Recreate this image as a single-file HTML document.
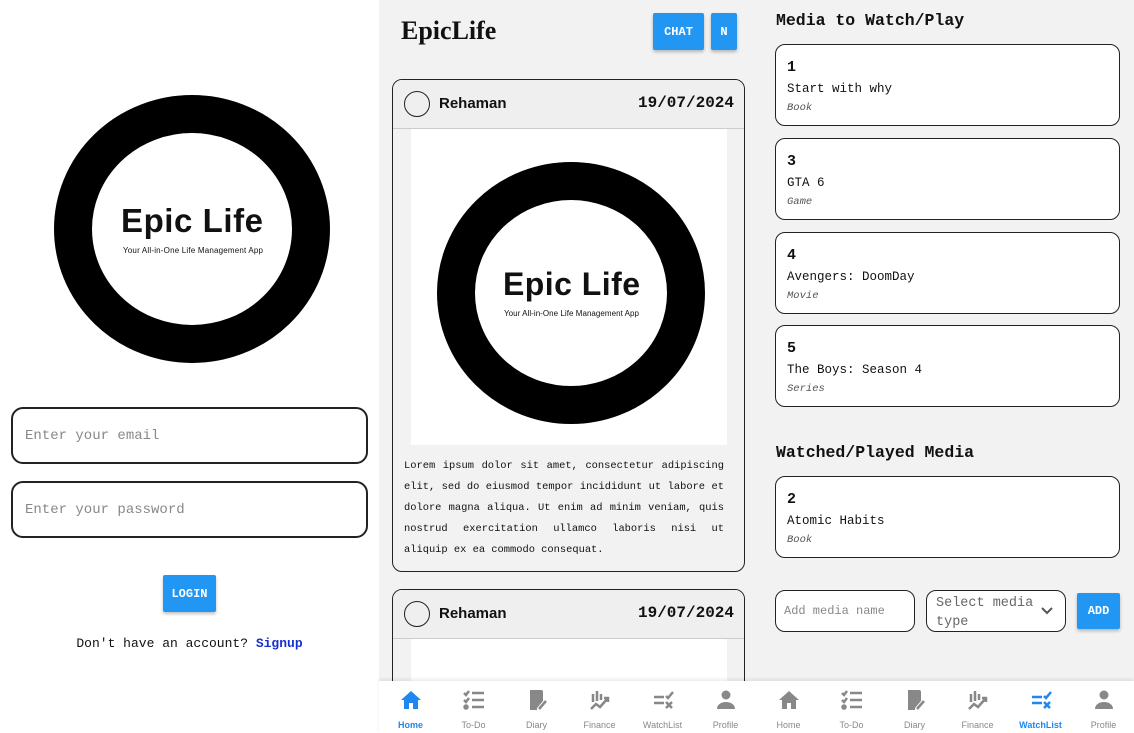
<!DOCTYPE html>
<html><head><meta charset="utf-8"><style>
*{box-sizing:border-box;margin:0;padding:0}
body{width:1134px;height:733px;overflow:hidden;position:relative;background:#f2f2f2;font-family:"Liberation Mono",monospace;color:#111}
.abs{position:absolute}
#left{left:0;top:0;width:379px;height:733px;background:#fff}
.inp{position:absolute;left:11px;width:357px;height:57px;border:2px solid #222;border-radius:12px;background:#fff;color:#888;font-size:14px;padding:19px 0 0 12px}
.btn{position:absolute;background:#2196f3;color:#fff;font-weight:bold;display:flex;align-items:center;justify-content:center;border-radius:2px;box-shadow:0 2px 3px rgba(0,0,0,.25)}
.card{position:absolute;left:392px;width:353px;border:1.5px solid #222;border-radius:10px;overflow:hidden;background:#f2f2f2}
.chead{height:49px;background:#efefef;border-bottom:1px solid #ccc;position:relative}
.av{position:absolute;left:11px;top:11px;width:26px;height:26px;border:1.5px solid #222;border-radius:50%}
.nm{position:absolute;left:46px;top:15px;font-weight:bold;font-size:15px;font-family:"Liberation Sans Narrow","Liberation Sans",sans-serif}
.dt{position:absolute;right:10px;top:14px;font-weight:bold;font-size:16px}
.mc{position:absolute;left:775px;width:345px;height:82px;border:1.2px solid #222;border-radius:10px;background:#fff}
.mc b{position:absolute;left:11px;top:14px;font-size:15px}
.mc span{position:absolute;left:11px;top:37px;font-size:12.5px}
.mc i{position:absolute;left:11px;top:57px;font-size:10.5px;color:#555}
.h2{position:absolute;left:776px;font-weight:bold;font-size:16.5px}
#nav{left:379px;top:681px;width:755px;height:52px;background:#fff;box-shadow:0 -2px 3px rgba(0,0,0,.08)}
.ni{position:absolute;top:0;width:63px;height:52px;text-align:center;color:#888}
.ni svg{position:absolute;left:20px;top:7px}
.ni div{position:absolute;left:0;width:63px;top:39px;font-size:9px;font-family:"Liberation Sans Narrow","Liberation Sans",sans-serif}
.on{color:#1e88f0}
</style></head><body>

<div id="left" class="abs">
<svg class="abs" style="left:50px;top:90px" width="285" height="278" viewBox="0 0 285 278">
<ellipse cx="142" cy="139" rx="119" ry="115" fill="none" stroke="#000" stroke-width="38"/>
<path d="M14 110 Q6 170 40 220" stroke="#000" stroke-width="5" fill="none"/>
<text x="71" y="142" textLength="142" font-family="Liberation Sans,sans-serif" font-weight="bold" font-size="33" fill="#111">Epic Life</text>
<text x="73" y="163" textLength="140" font-family="Liberation Sans,sans-serif" font-size="8" fill="#111">Your All-in-One Life Management App</text>
</svg>
<div class="inp" style="top:407px">Enter your email</div>
<div class="inp" style="top:481px">Enter your password</div>
<div class="btn" style="left:163px;top:575px;width:53px;height:37px;font-size:12px">LOGIN</div>
<div class="abs" style="left:0;width:379px;top:636px;text-align:center;font-size:13px">Don't have an account? <b style="color:#1a2fd0">Signup</b></div>
</div>

<div class="abs" style="left:401px;top:16px;font-size:26px;font-weight:bold;font-family:'Liberation Serif',serif">EpicLife</div>
<div class="btn" style="left:653px;top:13px;width:51px;height:37px;font-size:12px">CHAT</div>
<div class="btn" style="left:711px;top:13px;width:26px;height:37px;font-size:12px">N</div>

<div class="card" style="top:79px;height:493px">
<div class="chead"><div class="av"></div><div class="nm">Rehaman</div><div class="dt">19/07/2024</div></div>
<div class="abs" style="left:18px;top:49px;width:316px;height:316px;background:#fff">
<svg width="316" height="316" viewBox="0 0 316 316">
<ellipse cx="160" cy="164" rx="115" ry="112" fill="none" stroke="#000" stroke-width="38"/>
<text x="92" y="166" textLength="137" font-family="Liberation Sans,sans-serif" font-weight="bold" font-size="32" fill="#111">Epic Life</text>
<text x="93" y="187" textLength="135" font-family="Liberation Sans,sans-serif" font-size="8" fill="#111">Your All-in-One Life Management App</text>
</svg></div>
<div class="abs" style="left:11px;top:376px;width:320px;font-size:10.4px;line-height:21px;text-align:justify">Lorem ipsum dolor sit amet, consectetur adipiscing elit, sed do eiusmod tempor incididunt ut labore et dolore magna aliqua. Ut enim ad minim veniam, quis nostrud exercitation ullamco laboris nisi ut aliquip ex ea commodo consequat.</div>
</div>
<div class="card" style="top:589px;height:120px">
<div class="chead"><div class="av"></div><div class="nm">Rehaman</div><div class="dt">19/07/2024</div></div>
<div class="abs" style="left:18px;top:49px;width:316px;height:80px;background:#fff"></div>
</div>

<div class="h2" style="top:11px">Media to Watch/Play</div>
<div class="mc" style="top:44px"><b>1</b><span>Start with why</span><i>Book</i></div>
<div class="mc" style="top:138px"><b>3</b><span>GTA 6</span><i>Game</i></div>
<div class="mc" style="top:232px"><b>4</b><span>Avengers: DoomDay</span><i>Movie</i></div>
<div class="mc" style="top:325px"><b>5</b><span>The Boys: Season 4</span><i>Series</i></div>
<div class="h2" style="top:443px">Watched/Played Media</div>
<div class="mc" style="top:476px"><b>2</b><span>Atomic Habits</span><i>Book</i></div>
<div class="abs" style="left:775px;top:590px;width:140px;height:42px;border:1.2px solid #222;border-radius:10px;background:#fff;color:#888;font-size:12px;padding:13px 0 0 8px">Add media name</div>
<div class="abs" style="left:926px;top:590px;width:140px;height:42px;border:1.2px solid #222;border-radius:10px;background:#fff;color:#666;font-size:13.5px;line-height:19px;padding:3px 0 0 9px;overflow:hidden">Select media<br>type
<svg class="abs" style="left:114px;top:16px" width="12" height="8"><path d="M1 1l5 5 5-5" stroke="#555" stroke-width="2" fill="none"/></svg></div>
<div class="btn" style="left:1077px;top:593px;width:43px;height:36px;font-size:12px">ADD</div>

<div id="nav" class="abs">
<div class="ni on" style="left:0"><svg width="24" height="24" viewBox="0 0 24 24"><path d="M12 3L2 12h3v9h5v-6h4v6h5v-9h3z" fill="currentColor"/></svg><div style="font-weight:bold">Home</div></div>
<div class="ni" style="left:63px"><svg width="24" height="24" viewBox="0 0 24 24" fill="none" stroke="currentColor" stroke-width="2.5"><path d="M2 5l2 2 3-4M2 12l2 2 3-4M10 5h12M10 12h12M10 19h12"/><circle cx="4" cy="19" r="1.5" fill="currentColor"/></svg><div>To-Do</div></div>
<div class="ni" style="left:126px"><svg width="24" height="24" viewBox="0 0 24 24"><path d="M5 2h11a2 2 0 012 2v9l-6 7v2H5z" fill="currentColor"/><path d="M14 21l7-8" stroke="currentColor" stroke-width="2.5"/></svg><div>Diary</div></div>
<div class="ni" style="left:189px"><svg width="24" height="24" viewBox="0 0 24 24" fill="none" stroke="currentColor" stroke-width="2.5"><path d="M5 6v8M9 3v10M13 6v6M3 21l5-5 4 3 8-9M16 10h4v4"/></svg><div>Finance</div></div>
<div class="ni" style="left:252px"><svg width="24" height="24" viewBox="0 0 24 24" fill="none" stroke="currentColor" stroke-width="2.5"><path d="M3 9h10M3 15h10M15 8l2 2 5-6M15 14l6 6M21 14l-6 6"/></svg><div>WatchList</div></div>
<div class="ni" style="left:315px"><svg width="24" height="24" viewBox="0 0 24 24"><circle cx="12" cy="7" r="4.5" fill="currentColor"/><path d="M3 21c0-5 5-7 9-7s9 2 9 7z" fill="currentColor"/></svg><div>Profile</div></div>
<div class="ni" style="left:378px"><svg width="24" height="24" viewBox="0 0 24 24"><path d="M12 3L2 12h3v9h5v-6h4v6h5v-9h3z" fill="currentColor"/></svg><div>Home</div></div>
<div class="ni" style="left:441px"><svg width="24" height="24" viewBox="0 0 24 24" fill="none" stroke="currentColor" stroke-width="2.5"><path d="M2 5l2 2 3-4M2 12l2 2 3-4M10 5h12M10 12h12M10 19h12"/><circle cx="4" cy="19" r="1.5" fill="currentColor"/></svg><div>To-Do</div></div>
<div class="ni" style="left:504px"><svg width="24" height="24" viewBox="0 0 24 24"><path d="M5 2h11a2 2 0 012 2v9l-6 7v2H5z" fill="currentColor"/><path d="M14 21l7-8" stroke="currentColor" stroke-width="2.5"/></svg><div>Diary</div></div>
<div class="ni" style="left:567px"><svg width="24" height="24" viewBox="0 0 24 24" fill="none" stroke="currentColor" stroke-width="2.5"><path d="M5 6v8M9 3v10M13 6v6M3 21l5-5 4 3 8-9M16 10h4v4"/></svg><div>Finance</div></div>
<div class="ni on" style="left:630px"><svg width="24" height="24" viewBox="0 0 24 24" fill="none" stroke="currentColor" stroke-width="2.5"><path d="M3 9h10M3 15h10M15 8l2 2 5-6M15 14l6 6M21 14l-6 6"/></svg><div style="font-weight:bold">WatchList</div></div>
<div class="ni" style="left:693px"><svg width="24" height="24" viewBox="0 0 24 24"><circle cx="12" cy="7" r="4.5" fill="currentColor"/><path d="M3 21c0-5 5-7 9-7s9 2 9 7z" fill="currentColor"/></svg><div>Profile</div></div>
</div>
</body></html>
